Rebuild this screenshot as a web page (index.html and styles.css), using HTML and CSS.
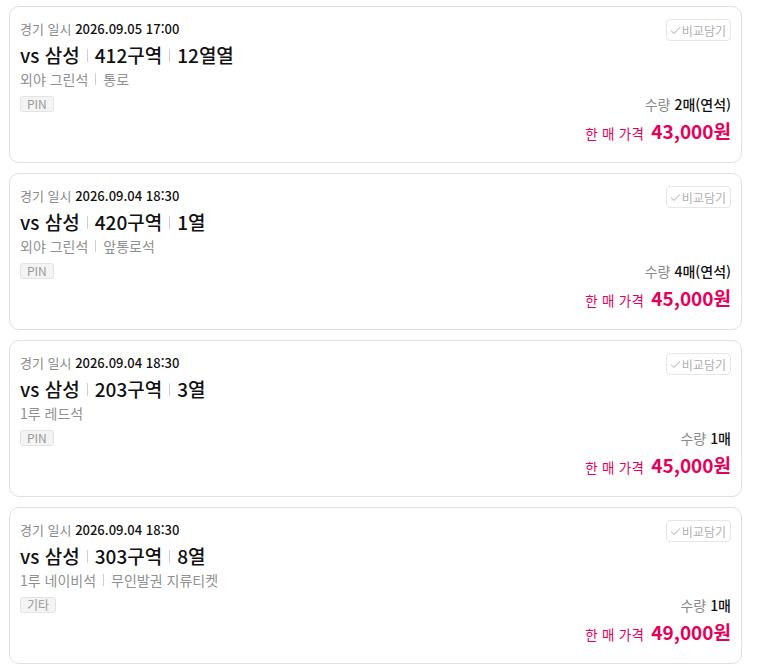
FILE: index.html
```html
<!DOCTYPE html>
<html lang="ko">
<head>
<meta charset="utf-8">
<link rel="stylesheet" href="styles.css">
</head>
<body>
<div class="list">
  <div class="card">
    <div class="left">
      <div class="date"><span class="lbl">경기 일시</span> <span class="val">2026.09.05 17:00</span></div>
      <div class="title"><span>vs 삼성</span><i class="sep"></i><span>412구역</span><i class="sep"></i><span>12열열</span></div>
      <div class="sub"><span>외야 그린석</span><i class="sep2"></i><span>통로</span></div>
      <div><span class="badge">PIN</span></div>
    </div>
    <div class="right">
      <button class="cmp"><svg width="11" height="9" viewBox="0 0 12 10"><path d="M1 5.2 L4.3 8.3 L11 1.5" fill="none" stroke="#c8c8c8" stroke-width="1.3"/></svg>비교담기</button>
      <div class="qty"><span class="lbl">수량</span> <span class="val">2매(연석)</span></div>
      <div class="price"><span class="plbl">한 매 가격</span><b>43,000원</b></div>
    </div>
  </div>
  <div class="card">
    <div class="left">
      <div class="date"><span class="lbl">경기 일시</span> <span class="val">2026.09.04 18:30</span></div>
      <div class="title"><span>vs 삼성</span><i class="sep"></i><span>420구역</span><i class="sep"></i><span>1열</span></div>
      <div class="sub"><span>외야 그린석</span><i class="sep2"></i><span>앞통로석</span></div>
      <div><span class="badge">PIN</span></div>
    </div>
    <div class="right">
      <button class="cmp"><svg width="11" height="9" viewBox="0 0 12 10"><path d="M1 5.2 L4.3 8.3 L11 1.5" fill="none" stroke="#c8c8c8" stroke-width="1.3"/></svg>비교담기</button>
      <div class="qty"><span class="lbl">수량</span> <span class="val">4매(연석)</span></div>
      <div class="price"><span class="plbl">한 매 가격</span><b>45,000원</b></div>
    </div>
  </div>
  <div class="card">
    <div class="left">
      <div class="date"><span class="lbl">경기 일시</span> <span class="val">2026.09.04 18:30</span></div>
      <div class="title"><span>vs 삼성</span><i class="sep"></i><span>203구역</span><i class="sep"></i><span>3열</span></div>
      <div class="sub"><span>1루 레드석</span></div>
      <div><span class="badge">PIN</span></div>
    </div>
    <div class="right">
      <button class="cmp"><svg width="11" height="9" viewBox="0 0 12 10"><path d="M1 5.2 L4.3 8.3 L11 1.5" fill="none" stroke="#c8c8c8" stroke-width="1.3"/></svg>비교담기</button>
      <div class="qty"><span class="lbl">수량</span> <span class="val">1매</span></div>
      <div class="price"><span class="plbl">한 매 가격</span><b>45,000원</b></div>
    </div>
  </div>
  <div class="card">
    <div class="left">
      <div class="date"><span class="lbl">경기 일시</span> <span class="val">2026.09.04 18:30</span></div>
      <div class="title"><span>vs 삼성</span><i class="sep"></i><span>303구역</span><i class="sep"></i><span>8열</span></div>
      <div class="sub"><span>1루 네이비석</span><i class="sep2"></i><span>무인발권 지류티켓</span></div>
      <div><span class="badge">기타</span></div>
    </div>
    <div class="right">
      <button class="cmp"><svg width="11" height="9" viewBox="0 0 12 10"><path d="M1 5.2 L4.3 8.3 L11 1.5" fill="none" stroke="#c8c8c8" stroke-width="1.3"/></svg>비교담기</button>
      <div class="qty"><span class="lbl">수량</span> <span class="val">1매</span></div>
      <div class="price"><span class="plbl">한 매 가격</span><b>49,000원</b></div>
    </div>
  </div>
</div>
</body>
</html>
```
FILE: styles.css
```css
* { box-sizing: border-box; }
html, body { margin: 0; background: #fff; }
body {
  font-family: "Noto Sans CJK KR", "Noto Sans", sans-serif;
  color: #111;
}
.list {
  display: flex;
  flex-direction: column;
  gap: 10px;
  padding: 6px 17px 0 9px;
}
.card {
  height: 157px;
  border: 1px solid #e0e0e0;
  border-radius: 10px;
  padding: 13px 10px 15px 10px;
  display: flex;
  justify-content: space-between;
}
.left { display: flex; flex-direction: column; }
.date { font-size: 13px; line-height: 18px; }
.date .lbl { color: #8a8a8a; }
.date .val { color: #111; font-weight: 500; }
.title {
  margin-top: 3px;
  font-size: 19px;
  line-height: 28px;
  font-weight: 500;
  display: flex;
  align-items: center;
}
.sep {
  display: inline-block;
  width: 1px;
  height: 13px;
  background: #cfcfcf;
  margin: 0 7px;
}
.sub {
  font-size: 14px;
  line-height: 20px;
  color: #909090;
  display: flex;
  align-items: center;
}
.sep2 {
  display: inline-block;
  width: 1px;
  height: 12px;
  background: #cfcfcf;
  margin: 0 7px;
}
.badge {
  display: inline-block;
  margin-top: 7px;
  font-size: 12px;
  line-height: 14px;
  padding: 0 6px;
  color: #9a9a9a;
  background: #f4f4f4;
  border: 1px solid #e3e3e3;
  border-radius: 3px;
}
.right {
  display: flex;
  flex-direction: column;
  align-items: flex-end;
}
.cmp {
  margin-top: -1px;
  height: 22px;
  padding: 0 4px 0 3px;
  border: 1px solid #e6e6e6;
  border-radius: 4px;
  background: #fff;
  font-family: inherit;
  font-size: 12px;
  color: #b0b0b0;
  display: flex;
  align-items: center;
  gap: 1px;
}
.qty {
  margin-top: auto;
  font-size: 14px;
  line-height: 20px;
}
.qty .lbl { color: #8a8a8a; }
.qty .val { color: #111; font-weight: 500; }
.price {
  margin-top: 3px;
  line-height: 28px;
  color: #e5005a;
  display: flex;
  align-items: baseline;
}
.plbl { font-size: 13.5px; letter-spacing: 0.3px; margin-right: 7px; }
.price b { font-size: 19px; font-weight: 700; }
```
